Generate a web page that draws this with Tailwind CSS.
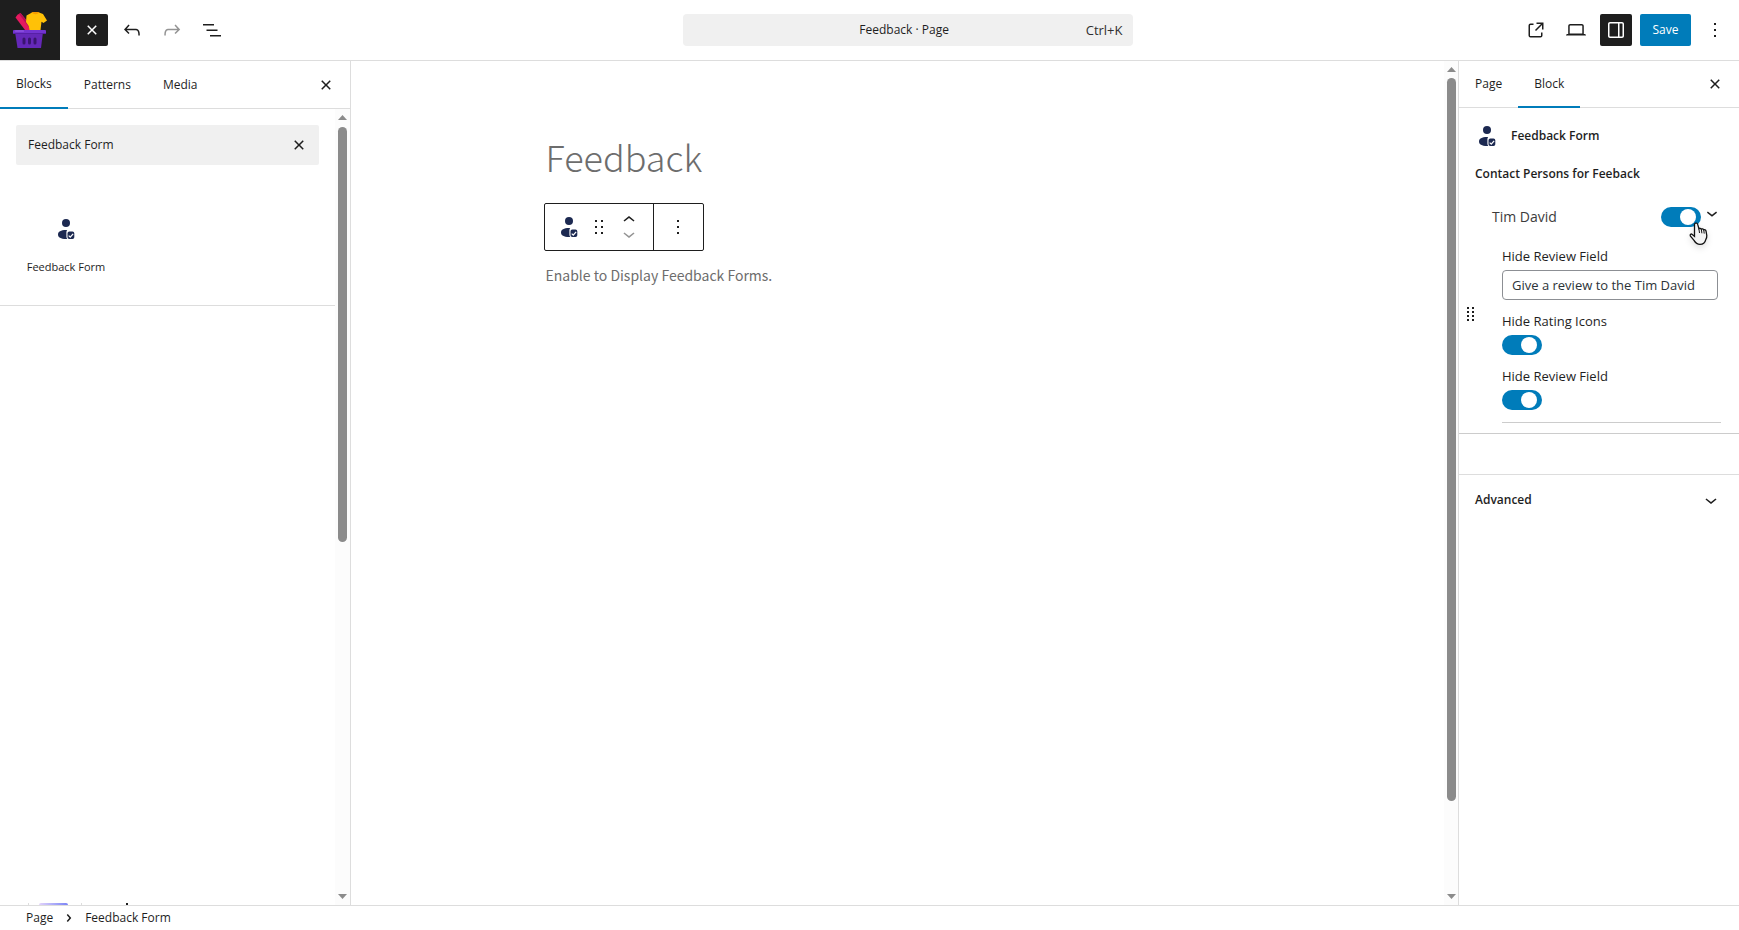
<!DOCTYPE html>
<html lang="en">
<head>
  <meta charset="UTF-8" />
  <meta name="viewport" content="width=device-width, initial-scale=1.0" />
  <title>Feedback · Page</title>
  <script src="https://cdn.jsdelivr.net/npm/@tailwindcss/browser@4"></script>
</head>
<body class="h-screen flex flex-col overflow-hidden bg-white text-[#1e1e1e] text-xs leading-5 font-['Segoe_UI','Open_Sans',sans-serif]">

  <!-- Shared icons -->
  <svg class="hidden" aria-hidden="true">
    <symbol id="close" viewBox="0 0 24 24"><path d="M12 13.06l3.712 3.713 1.061-1.06L13.061 12l3.712-3.712-1.06-1.06L12 10.938 8.288 7.227l-1.061 1.06L10.939 12l-3.712 3.712 1.06 1.061L12 13.061z" /></symbol>
    <symbol id="more" viewBox="0 0 24 24"><path d="M13 19h-2v-2h2v2zm0-6h-2v-2h2v2zm0-6h-2V5h2v2z" /></symbol>
    <symbol id="chevron-down" viewBox="0 0 24 24"><path d="M17.5 11.6L12 16l-5.5-4.4.9-1.2L12 14l4.5-3.6 1 1.2z" /></symbol>
    <symbol id="chevron-up" viewBox="0 0 24 24"><path d="M6.5 12.4L12 8l5.5 4.4-.9 1.2L12 10l-4.5 3.6-1-1.2z" /></symbol>
    <symbol id="person" viewBox="0 0 24 24" fill="#1c2951">
      <circle cx="12" cy="6" r="4" />
      <path d="M12 13h1.200q-.8 1-.8 2.300v4.300q0 1.500.8 2.400h-1.200C6.800 22 4 20.300 4 17.500S6.800 13 12 13z" />
      <path fill-rule="evenodd" d="M15.300 14.500h3.200q1.800 0 1.800 1.800v4q0 1.800-1.800 1.800h-3.200q-1.800 0-1.800-1.800v-4q0-1.800 1.800-1.800zM15.100 18.200l-.8.9 2 1.800 3.300-3.700-.9-.8-2.500 2.800z" />
    </symbol>
  </svg>

  <!-- Top bar -->
  <header class="flex items-center h-[61px] shrink-0 border-b border-[#ddd]">
    <div class="flex items-center w-[350px] h-full shrink-0">
      <a href="#" aria-label="View pages" class="flex items-center justify-center w-[60px] h-full bg-[#1e1e1e]">
        <svg class="w-9 h-9" viewBox="0 0 36 36">
          <path d="M3.500 5.500Q5 2 8.500 1l7.500 9 2 8h-5z" fill="#e5195f" />
          <path d="M7 2l1.500-1 8 10 1 5z" fill="#b80f55" />
          <path d="M14.500 3.500L20 .5q4 1.500 7 0l4 1.500 4 6.500-3.500 2.500-2-1.200L28.500 18h-11q-.5-5-3.500-8z" fill="#ffc107" />
          <path d="M19.500.6q4 3.400 8 0l-1-.6h-6z" fill="#f59b00" />
          <path d="M3 20h28l-2 16H5.500z" fill="#6528b8" />
          <rect x="1" y="18" width="33" height="4" rx="1" fill="#7334d0" />
          <rect x="1" y="21" width="33" height="1" fill="#5720a6" />
          <rect x="3" y="18.500" width="9" height="1" rx=".5" fill="#9963e8" />
          <path d="M12 27v4M17.500 27v4M23 27v4" stroke="#3a1470" stroke-width="3" stroke-linecap="round" />
        </svg>
      </a>
      <div class="flex items-center gap-2 pl-4">
        <button aria-label="Close block inserter" class="flex items-center justify-center w-8 h-8 rounded-xs bg-[#1e1e1e] text-white">
          <svg class="w-6 h-6 fill-current"><use href="#close" /></svg>
        </button>
        <button aria-label="Undo" class="flex items-center justify-center w-8 h-8">
          <svg class="w-6 h-6 fill-current" viewBox="0 0 24 24"><path d="M18.3 11.7c-.6-.6-1.4-.9-2.3-.9H6.700l2.900-3.300-1.100-1-4.500 5L8.500 16l1-1-2.700-2.700H16c.5 0 .9.2 1.300.5 1 1 1 3.400 1 4.500v.3h1.500v-.2c0-1.500 0-4.300-1.500-5.700z" /></svg>
        </button>
        <button aria-label="Redo" class="flex items-center justify-center w-8 h-8 text-[#949494]">
          <svg class="w-6 h-6 fill-current" viewBox="0 0 24 24"><path d="M15.600 6.500l-1.100 1 2.900 3.300H8c-.9 0-1.700.3-2.300.9-1.400 1.500-1.400 4.200-1.400 5.600v.2h1.500v-.3c0-1.100 0-3.500 1-4.500.3-.3.7-.5 1.300-.5h9.200L14.500 15l1.100 1.100 4.600-4.600-4.600-5z" /></svg>
        </button>
        <button aria-label="Document overview" class="flex items-center justify-center w-8 h-8">
          <svg class="w-6 h-6 fill-current" viewBox="0 0 24 24"><path d="M3 6h11v1.500H3V6Zm3.500 5.500h11V13h-11v-1.500ZM21 17H10v1.500h11V17Z" /></svg>
        </button>
      </div>
    </div>

    <div class="flex flex-1 justify-center">
      <button class="flex items-center w-[450px] h-8 pl-10 pr-[10px] rounded-sm bg-[#f0f0f0]">
        <span class="flex-1">Feedback · Page</span>
        <span class="text-[13px] text-[#2f2f2f]">Ctrl+K</span>
      </button>
    </div>

    <div class="flex items-center justify-end gap-2 w-[274px] pr-2 shrink-0">
      <a href="#" aria-label="View page" class="flex items-center justify-center w-8 h-8">
        <svg class="w-6 h-6 fill-current" viewBox="0 0 24 24"><path d="M19.500 4.500h-7V6h4.440l-5.970 5.970 1.060 1.060L18 7.060v4.440h1.500v-7Zm-13 1a2 2 0 0 0-2 2v10a2 2 0 0 0 2 2h10a2 2 0 0 0 2-2v-3H17v3a.5.5 0 0 1-.5.5h-10a.5.5 0 0 1-.5-.5v-10a.5.5 0 0 1 .5-.5h3V5.500h-3Z" /></svg>
      </a>
      <button aria-label="Preview" class="flex items-center justify-center w-8 h-8">
        <svg class="w-6 h-6 fill-current" viewBox="0 0 24 24"><path d="M20.500 16h-.7V8c0-1.100-.9-2-2-2H6.200c-1.100 0-2 .9-2 2v8h-.7c-.8 0-1.500.7-1.500 1.500h20c0-.8-.7-1.500-1.500-1.500zM5.700 8c0-.3.2-.5.5-.5h11.600c.3 0 .5.2.5.5v7.600H5.700V8z" /></svg>
      </button>
      <button aria-label="Settings" class="flex items-center justify-center w-8 h-8 rounded-xs bg-[#1e1e1e] text-white">
        <svg class="w-6 h-6 fill-current" viewBox="0 0 24 24"><path d="M18 4H6c-1.100 0-2 .9-2 2v12c0 1.100.9 2 2 2h12c1.100 0 2-.9 2-2V6c0-1.100-.9-2-2-2zm-4 14.500H6c-.3 0-.5-.2-.5-.5V6c0-.3.2-.5.5-.5h8v13zm4.500-.5c0 .3-.2.5-.5.5h-2.500v-13H18c.3 0 .5.2.5.5v12z" /></svg>
      </button>
      <button class="w-[51px] h-8 rounded-xs bg-[#007cba] text-white">Save</button>
      <button aria-label="Options" class="flex items-center justify-center w-8 h-8">
        <svg class="w-6 h-6 fill-current"><use href="#more" /></svg>
      </button>
    </div>
  </header>

  <div class="flex flex-1 min-h-0">

    <!-- Block inserter -->
    <aside class="flex flex-col w-[351px] shrink-0 border-r border-[#ddd]">
      <div class="flex items-stretch h-12 shrink-0 border-b border-[#ddd]">
        <button class="-mb-px px-4 border-b-2 border-[#007cba]">Blocks</button>
        <button class="px-4">Patterns</button>
        <button class="px-4">Media</button>
        <button aria-label="Close" class="flex items-center ml-auto pr-3">
          <svg class="w-6 h-6 fill-current"><use href="#close" /></svg>
        </button>
      </div>
      <div class="flex flex-1 min-h-0">
        <div class="flex flex-col flex-1 min-w-0">
          <div class="h-[197px] border-b border-[#ddd] pt-4 px-4">
            <div class="flex items-center h-10 pl-3 pr-2 rounded-xs bg-[#f0f0f0]">
              <input type="text" aria-label="Search" value="Feedback Form" class="flex-1 min-w-0 outline-none" />
              <button aria-label="Reset search">
                <svg class="w-6 h-6 fill-current"><use href="#close" /></svg>
              </button>
            </div>
            <button class="flex flex-col items-center gap-4 w-[100px] pt-[52px] text-[11px]">
              <svg class="w-6 h-6"><use href="#person" /></svg>
              <span class="whitespace-nowrap">Feedback Form</span>
            </button>
          </div>
          <!-- Next result peeking over the footer -->
          <div class="flex mt-auto pl-7 items-end">
            <span class="w-px h-[2px] bg-[#ddd]"></span>
            <span class="w-[29px] h-[2px] ml-[10px] rounded-t-full bg-linear-to-r from-[#e3d3fa] to-[#7b83f5]"></span>
            <span class="w-px h-[2px] ml-[13px] bg-[#ddd]"></span>
            <span class="w-[2px] h-[2px] ml-11 bg-[#1e1e1e]"></span>
          </div>
        </div>
        <div class="flex flex-col items-center w-[15px] py-[6px] bg-[#fcfcfc]">
          <svg class="w-[9px] h-[5px] shrink-0" viewBox="0 0 9 5" fill="#8b8b8b"><path d="M0 5L4.500 0 9 5z" /></svg>
          <div class="w-[9px] h-[415px] mt-[7px] rounded-full bg-[#8b8b8b]"></div>
          <svg class="w-[9px] h-[5px] shrink-0 mt-auto" viewBox="0 0 9 5" fill="#8b8b8b"><path d="M0 0L4.500 5 9 0z" /></svg>
        </div>
      </div>
    </aside>

    <!-- Editor canvas -->
    <main class="flex flex-1 min-w-0">
      <div class="flex-1 min-w-0 pt-[67px]">
        <div class="max-w-[704px] mx-auto font-['Source_Sans_Pro','Noto_Sans_CJK_SC',sans-serif] text-[#6d6d6d]">
          <h1 class="text-4xl leading-14 font-light">Feedback</h1>
          <div class="flex w-40 h-12 mt-[19px] -ml-[2px] rounded-xs border border-[#1e1e1e] bg-white text-[#1e1e1e]">
            <div class="flex items-center w-[109px] pl-3 border-r border-[#1e1e1e]">
              <button aria-label="Feedback Form"><svg class="w-6 h-6"><use href="#person" /></svg></button>
              <button aria-label="Drag" class="ml-[6px]">
                <svg class="w-6 h-6 fill-current" viewBox="0 0 24 24"><path d="M8 7h2V5H8v2zm0 6h2v-2H8v2zm0 6h2v-2H8v2zm6-14v2h2V5h-2zm0 8h2v-2h-2v2zm0 6h2v-2h-2v2z" /></svg>
              </button>
              <div class="flex flex-col ml-[6px]">
                <button aria-label="Move up" class="h-[14px] flex items-center"><svg class="w-6 h-6 fill-current"><use href="#chevron-up" /></svg></button>
                <button aria-label="Move down" class="h-[14px] flex items-center text-[#949494]"><svg class="w-6 h-6 fill-current"><use href="#chevron-down" /></svg></button>
              </div>
            </div>
            <button aria-label="Options" class="flex flex-1 items-center justify-center">
              <svg class="w-6 h-6 fill-current"><use href="#more" /></svg>
            </button>
          </div>
          <p class="mt-3 text-sm leading-6">Enable to Display Feedback Forms.</p>
        </div>
      </div>
      <div class="flex flex-col items-start w-[14px] pl-[3px] py-[6px] bg-[#fcfcfc]">
        <svg class="w-[9px] h-[5px] shrink-0" viewBox="0 0 9 5" fill="#8b8b8b"><path d="M0 5L4.500 0 9 5z" /></svg>
        <div class="w-[9px] h-[723px] mt-[6px] rounded-full bg-[#8b8b8b]"></div>
        <svg class="w-[9px] h-[5px] shrink-0 mt-auto" viewBox="0 0 9 5" fill="#8b8b8b"><path d="M0 0L4.500 5 9 0z" /></svg>
      </div>
    </main>

    <!-- Block settings -->
    <aside class="w-[281px] shrink-0 border-l border-[#ddd]">
      <div class="flex items-stretch h-[47px] border-b border-[#ddd]">
        <button class="px-4">Page</button>
        <button class="-mb-px px-4 border-b-2 border-[#007cba]">Block</button>
        <button aria-label="Close settings" class="flex items-center ml-auto pr-3">
          <svg class="w-6 h-6 fill-current"><use href="#close" /></svg>
        </button>
      </div>

      <div class="h-[326px] pt-4 border-b border-[#ccc]">
        <div class="flex items-center gap-3 h-6 pl-4">
          <svg class="w-6 h-6"><use href="#person" /></svg>
          <h2 class="font-semibold">Feedback Form</h2>
        </div>
        <h3 class="mt-4 pl-4 font-semibold">Contact Persons for Feeback</h3>

        <div class="flex items-center mt-[21px] pl-[33px] h-6">
          <label for="person-on" class="flex-1 text-sm text-[#3c3c3c]">Tim David</label>
          <div class="relative flex">
            <input id="person-on" type="checkbox" checked class="appearance-none w-10 h-5 rounded-full bg-[#007cba]" />
            <span class="absolute top-[2px] right-[5px] w-4 h-4 rounded-full bg-white pointer-events-none"></span>
            <!-- Hand pointer -->
            <svg class="absolute top-[15px] left-7 w-5 h-6 drop-shadow-md" viewBox="0 0 20 24">
              <path d="M6.500 1.200c1.100-.4 2 .2 2.200 1.200l1.200 4.200c.8-.6 2-.4 2.400.6.800-.6 2-.3 2.400.7 1-.6 2 0 2.300 1l.8 4.600c.2 2-.6 3.300-1.200 4.600-.6 2.600-2.600 4.200-5.600 4.200-3 0-4.500-1.500-6-4L1.300 14c-.6-1.500.8-2.500 2-1.600l2.200 2L5.500 2.500c0-.6.3-1.100 1-1.300z" fill="#f4f4f4" stroke="#111" stroke-width="1.300" />
              <path d="M9.900 6.600l.6 4.400M12.400 7.500l.5 3.800M14.800 8.200l.4 3.400" fill="none" stroke="#111" />
            </svg>
          </div>
          <button aria-label="Collapse Tim David" class="mr-4 mb-2">
            <svg class="w-[22px] h-[22px] fill-current"><use href="#chevron-down" /></svg>
          </button>
        </div>

        <div class="flex items-center">
          <button aria-label="Reorder" class="w-[43px] pl-2 pb-6">
            <svg class="w-2 h-[14px]" viewBox="0 0 8 14" fill="#1e1e1e"><path d="M0 0h2v2H0zM5 0h2v2H5zM0 4h2v2H0zM5 4h2v2H5zM0 8h2v2H0zM5 8h2v2H5zM0 12h2v2H0zM5 12h2v2H5z" /></svg>
          </button>
          <div class="flex flex-col flex-1 mr-[18px] pt-[17px] pb-3 border-b border-[#ccc] text-[13px]">
            <label for="review-text">Hide Review Field</label>
            <input id="review-text" type="text" value="Give a review to the Tim David" class="h-[30px] mt-1 mr-[3px] px-[9px] rounded-sm border border-[#8c8f94] text-[#2c3338] outline-none" />
            <label for="rating-on" class="mt-[11px]">Hide Rating Icons</label>
            <div class="relative flex w-10 mt-1">
              <input id="rating-on" type="checkbox" checked class="appearance-none w-10 h-5 rounded-full bg-[#007cba]" />
              <span class="absolute top-[2px] right-[5px] w-4 h-4 rounded-full bg-white pointer-events-none"></span>
            </div>
            <label for="review-on" class="mt-[11px]">Hide Review Field</label>
            <div class="relative flex w-10 mt-1">
              <input id="review-on" type="checkbox" checked class="appearance-none w-10 h-5 rounded-full bg-[#007cba]" />
              <span class="absolute top-[2px] right-[5px] w-4 h-4 rounded-full bg-white pointer-events-none"></span>
            </div>
          </div>
        </div>
      </div>

      <button class="flex items-center justify-between w-full h-[51px] mt-10 px-4 border-t border-[#ddd] font-semibold">
        Advanced
        <svg class="w-6 h-6 fill-current"><use href="#chevron-down" /></svg>
      </button>
    </aside>
  </div>

  <!-- Breadcrumb -->
  <footer class="flex items-center h-[25px] shrink-0 pl-[26px] border-t border-[#ddd]">
    <a href="#">Page</a>
    <svg class="w-6 h-6 mx-1 fill-current" viewBox="0 0 24 24"><path d="M10.862 8.040L14.280 12.029L10.862 16.017L9.723 15.040L12.305 12.029L9.723 9.017z" /></svg>
    <a href="#">Feedback Form</a>
  </footer>

</body>
</html>
